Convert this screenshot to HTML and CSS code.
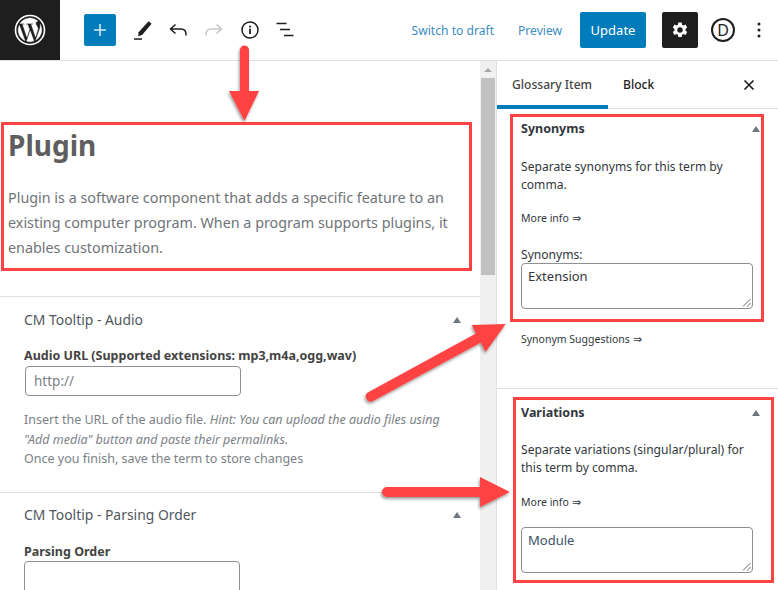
FILE: index.html
```html
<!DOCTYPE html>
<html lang="en">
<head>
<meta charset="utf-8">
<title>Plugin</title>
<link rel="stylesheet" href="styles.css">
</head>
<body>
<div class="app">
  <header class="topbar">
    <div class="wp-logo">
      <svg width="36" height="36" viewBox="0 0 36 36"><circle cx="18" cy="18" r="14.5" fill="none" stroke="#fff" stroke-width="1.6"/><path fill="#fff" stroke="#fff" stroke-width=".4" d="M6.2 18c0 4.700 2.700 8.700 6.700 10.600L7.300 13.200A11.700 11.700 0 0 0 6.200 18zM25.900 17.400c0-1.500-.5-2.500-1-3.300-.6-1-1.200-1.800-1.200-2.800 0-1.100.8-2.100 2-2.100h.2A11.800 11.800 0 0 0 8 11.500h.8c1.200 0 3.100-.1 3.100-.1.600 0 .7.900.1 1 0 0-.6.1-1.300.1l4.200 12.400 2.500-7.500-1.800-4.900c-.6 0-1.200-.1-1.200-.1-.6 0-.5-1 .1-1 0 0 1.900.1 3 .1 1.200 0 3.100-.1 3.100-.1.600 0 .7.900.1 1 0 0-.6.1-1.300.1l4.100 12.300 1.200-3.800c.5-1.600.9-2.700.9-3.700zM18.200 19l-3.500 10.200a11.800 11.800 0 0 0 7.200-.2l-.1-.2zM28.300 12.300c.1.400.1.800.1 1.200 0 1.200-.2 2.500-.9 4.200l-3.600 10.400A11.800 11.800 0 0 0 28.300 12.300z"/></svg>
    </div>
    <div class="tools">
      <button class="add" type="button" aria-label="Add block"><svg width="18" height="18" viewBox="0 0 18 18"><path d="M9 3v12M3 9h12" stroke="#d7e8f2" stroke-width="1.6" fill="none"/></svg></button>
      <svg class="tool t-pen" width="24" height="24" viewBox="0 0 24 24"><path fill="#1e1e1e" d="M18.600 3.200l3 2.500-9.500 11.300-3.900 1.300.4-4.100z"/><rect x="4" y="20.300" width="8" height="1.500" fill="#1e1e1e"/></svg>
      <svg class="tool t-undo" width="24" height="24" viewBox="0 0 24 24"><path fill="none" stroke="#1e1e1e" stroke-width="1.500" d="M9.500 6.500L4.500 11l5 4.500M4.500 11H15c3 0 5 1.800 5 5.500v1"/></svg>
      <svg class="tool t-redo" width="24" height="24" viewBox="0 0 24 24"><path fill="none" stroke="#c8c8c8" stroke-width="1.500" d="M14.500 6.500l5 4.500-5 4.500M19.500 11H9c-3 0-5 1.800-5 5.500v1"/></svg>
      <svg class="tool t-info" width="24" height="24" viewBox="0 0 24 24"><circle cx="12" cy="12" r="8" fill="none" stroke="#1e1e1e" stroke-width="1.500"/><rect x="11.100" y="10.700" width="1.800" height="5.300" fill="#1e1e1e"/><rect x="11.100" y="7.700" width="1.800" height="1.800" fill="#1e1e1e"/></svg>
      <svg class="tool t-list" width="24" height="24" viewBox="0 0 24 24"><path stroke="#1e1e1e" stroke-width="1.500" fill="none" d="M2.500 5.500h10M6 11.500h10M10 17.500h9.500"/></svg>
    </div>
    <div class="actions">
      <a class="link l-draft">Switch to draft</a>
      <a class="link l-preview">Preview</a>
      <button class="update" type="button">Update</button>
      <button class="settings" type="button" aria-label="Settings"><svg width="20" height="20" viewBox="0 0 20 20"><path fill="#fff" fill-rule="evenodd" d="M8.300 2.500h3.400l.4 2.200 1.300.7 2.100-.8 1.700 3-1.700 1.400v1.500l1.700 1.400-1.700 3-2.100-.8-1.300.7-.4 2.200H8.300l-.4-2.200-1.300-.7-2.100.8-1.700-3 1.700-1.400V9L2.800 7.600l1.700-3 2.100.8 1.300-.7zM10 7.300a2.700 2.700 0 1 0 0 5.400 2.700 2.700 0 0 0 0-5.400z"/></svg></button>
      <div class="divi">D</div>
      <svg class="more" width="6" height="18" viewBox="0 0 6 18"><circle cx="3" cy="3" r="1.500" fill="#1e1e1e"/><circle cx="3" cy="9" r="1.500" fill="#1e1e1e"/><circle cx="3" cy="15" r="1.500" fill="#1e1e1e"/></svg>
    </div>
  </header>
  <div class="body">
    <main class="editor">
      <div class="doc">
        <section class="post">
          <h1>Plugin</h1>
          <p>Plugin is a software component that adds a specific feature to an existing computer program. When a program supports plugins, it enables customization.</p>
        </section>
        <section class="box box-audio">
          <div class="box-head"><h2>CM Tooltip - Audio</h2><span class="tri"></span></div>
          <label class="strong">Audio URL (Supported extensions: mp3,m4a,ogg,wav)</label>
          <div class="url">http://</div>
          <p class="hint">Insert the URL of the audio file. <em>Hint: You can upload the audio files using "Add media" button and paste their permalinks.</em><br>Once you finish, save the term to store changes</p>
        </section>
        <section class="box box-order">
          <div class="box-head"><h2>CM Tooltip - Parsing Order</h2><span class="tri"></span></div>
          <label class="strong">Parsing Order</label>
          <div class="order"></div>
        </section>
      </div>
      <div class="scrollbar"><span class="sb-up"></span><span class="sb-thumb"></span></div>
    </main>
    <aside class="side">
      <div class="tabs">
        <div class="tab active">Glossary Item</div>
        <div class="tab tab-block">Block</div>
        <svg class="close" width="14" height="14" viewBox="0 0 14 14"><path d="M2.500 2.500l9 9M11.500 2.500l-9 9" stroke="#1e1e1e" stroke-width="1.700" fill="none"/></svg>
      </div>
      <section class="panel p-syn">
        <div class="p-head"><h3>Synonyms</h3><span class="tri"></span></div>
        <p class="p-text">Separate synonyms for this term by comma.</p>
        <p class="p-more">More info ⇒</p>
        <div class="p-label">Synonyms:</div>
        <div class="area">Extension<svg class="grip" width="9" height="9" viewBox="0 0 9 9"><path d="M1 8.500L8.500 1M5 8.500L8.500 5" stroke="#666" stroke-width="1" fill="none"/></svg></div>
        <p class="p-more p-sugg">Synonym Suggestions ⇒</p>
      </section>
      <section class="panel p-var">
        <div class="p-head"><h3>Variations</h3><span class="tri"></span></div>
        <p class="p-text">Separate variations (singular/plural) for this term by comma.</p>
        <p class="p-more p-more-var">More info ⇒</p>
        <div class="area">Module<svg class="grip" width="9" height="9" viewBox="0 0 9 9"><path d="M1 8.500L8.500 1M5 8.500L8.500 5" stroke="#666" stroke-width="1" fill="none"/></svg></div>
      </section>
    </aside>
  </div>
  <div class="mark m-plugin"></div>
  <div class="mark m-syn"></div>
  <div class="mark m-var"></div>
  <svg class="arrows" width="778" height="590" viewBox="0 0 778 590">
    <defs><filter id="sh" x="-20%" y="-20%" width="140%" height="140%"><feDropShadow dx="-1" dy="2" stdDeviation="1.500" flood-color="#000" flood-opacity=".4"/></filter></defs>
    <g fill="#ff4343" filter="url(#sh)">
      <path d="M240 50a4.500 4.500 0 0 1 9 0v41h10l-14.500 30L229 91h11z"/>
      <path d="M367.800 392.600L476 333.600L471.700 325L505.700 324L485.700 351.700L480.800 342.400L372.200 401.400A5 5 0 0 1 367.800 392.600z"/>
      <path d="M387 487h93v-10l30 15-30 15v-10h-93a5 5 0 0 1 0-10z"/>
    </g>
  </svg>
</div>
</body>
</html>
```

FILE: styles.css
```css
* { box-sizing: border-box; }
html, body { margin: 0; padding: 0; }
body { width: 778px; height: 590px; overflow: hidden; background: #fff; font-family: "Noto Sans", sans-serif; color: #1e1e1e; }
.app { position: relative; width: 778px; height: 590px; overflow: hidden; display: flex; flex-direction: column; }
.topbar { height: 61px; flex: none; display: flex; align-items: center; border-bottom: 1px solid #e0e0e0; }
.wp-logo { width: 60px; height: 60px; background: #1e1e1e; display: flex; align-items: center; justify-content: center; flex: none; }
.tools { display: flex; align-items: center; margin-left: 24px; height: 60px; }
.add { width: 32px; height: 32px; padding: 0; border: 0; border-radius: 2px; background: #007cba; display: flex; align-items: center; justify-content: center; }
.tool { flex: none; }
.t-pen { margin-left: 14px; }
.t-undo { margin-left: 12px; }
.t-redo { margin-left: 12px; }
.t-info { margin-left: 12px; }
.t-list { margin-left: 12px; }
.actions { margin-left: auto; display: flex; align-items: center; height: 60px; }
.link { font-size: 12.100px; color: #3a8dbf; }
.l-preview { margin-left: 24px; }
.update { margin-left: 18px; width: 66px; height: 36px; padding: 0; border: 0; border-radius: 2px; background: #007cba; color: #fff; font: 13px "Noto Sans", sans-serif; }
.settings { margin-left: 16px; width: 36px; height: 36px; padding: 0; border: 0; border-radius: 2px; background: #1e1e1e; display: flex; align-items: center; justify-content: center; }
.divi { margin-left: 13px; width: 24px; height: 24px; border: 2px solid #1e1e1e; border-radius: 50%; display: flex; align-items: center; justify-content: center; font-size: 16px; line-height: 1; }
.more { margin-left: 21px; margin-right: 16px; }
.body { flex: 1; min-height: 0; display: flex; }
.editor { width: 496px; flex: none; display: flex; overflow: hidden; }
.doc { width: 480px; flex: none; }
.post { height: 236px; padding: 65px 8px 0; border-bottom: 1px solid #e0e0e0; }
.post h1 { margin: 0; font-size: 28px; line-height: 38px; font-weight: 700; color: #5e5e5e; }
.post p { margin: 21px 0 0; font-size: 14.350px; line-height: 25px; color: #707478; }
.box { padding: 0 24px; border-bottom: 1px solid #e0e0e0; }
.box-audio { height: 196px; }
.box-head { display: flex; align-items: center; justify-content: space-between; }
.box-audio .box-head { padding: 14px 0 0; }
.box-order .box-head { padding: 13px 0 0; }
.box-head h2 { margin: 0; font-size: 13.900px; line-height: 18px; font-weight: 400; color: #50575e; }
.tri { display: block; width: 0; height: 0; border-left: 4px solid transparent; border-right: 4px solid transparent; border-bottom: 6px solid #6c7781; }
.box-head .tri { margin-right: -5px; }
.strong { display: block; margin-top: 18px; font-size: 12.500px; line-height: 18px; font-weight: 700; color: #444; }
.url { width: 216px; height: 30px; margin-left: 1px; margin-top: 1px; border: 1px solid #8c8f94; border-radius: 4px; padding: 0 8px; font-size: 13.500px; line-height: 28px; color: #7b8187; }
.hint { margin: 14px 0 0; font-size: 12.500px; line-height: 19.500px; color: #7b8187; }
.hint em { font-style: italic; }
.box-order { border-bottom: 0; }
.box-order .strong { margin-top: 19px; }
.order { width: 216px; height: 40px; border: 1px solid #8c8f94; border-radius: 4px; }
.scrollbar { width: 16px; flex: none; background: #f0f0f0; display: flex; flex-direction: column; align-items: center; }
.sb-up { margin-top: 7px; width: 0; height: 0; border-left: 4px solid transparent; border-right: 4px solid transparent; border-bottom: 4px solid #a6a6a6; }
.sb-thumb { margin-top: 6px; width: 14px; height: 197px; background: #c1c1c1; }
.side { width: 282px; flex: none; border-left: 1px solid #e0e0e0; }
.tabs { height: 48px; display: flex; align-items: center; border-bottom: 1px solid #e0e0e0; position: relative; }
.tab { height: 48px; line-height: 48px; font-size: 12.100px; font-weight: 500; color: #1e1e1e; }
.tab.active { width: 111px; padding-left: 15px; color: #444; border-bottom: 4px solid #007cba; }
.tab-block { margin-left: 15px; }
.close { margin-left: auto; margin-right: 22px; }
.panel { padding: 0 24px; }
.p-syn { height: 280px; border-bottom: 1px solid #e0e0e0; padding-top: 11px; }
.p-var { padding-top: 15px; }
.p-head { display: flex; align-items: center; justify-content: space-between; }
.p-head h3 { margin: 0; font-size: 12.500px; line-height: 18px; font-weight: 700; color: #32373c; }
.p-syn .p-head .tri { margin-right: -6px; }
.p-var .p-head .tri { margin-right: -6px; }
.p-text { margin: 20px 0 0; font-size: 12.100px; line-height: 18px; color: #32373c; }
.p-var .p-text { margin-top: 19px; }
.p-more { margin: 16px 0 0; font-size: 10.500px; line-height: 16px; color: #32373c; }
.p-more-var { margin-top: 17px; }
.p-label { margin-top: 21px; font-size: 12.100px; line-height: 16px; color: #32373c; }
.area { position: relative; width: 232px; height: 46px; margin-top: 0; border: 1px solid #8c8f94; border-radius: 4px; padding: 2px 6px; font-size: 13px; line-height: 20px; color: #32373c; }
.p-var .area { margin-top: 17px; color: #3d5166; }
.grip { position: absolute; right: 1px; bottom: 1px; }
.p-sugg { margin-top: 22px; }
.mark { position: absolute; border: 3px solid #ff4343; }
.m-plugin { left: 1px; top: 122px; width: 471px; height: 149px; }
.m-syn { left: 510px; top: 114px; width: 254px; height: 208px; }
.m-var { left: 513px; top: 397px; width: 261px; height: 186px; }
.arrows { position: absolute; left: 0; top: 0; pointer-events: none; }
```
